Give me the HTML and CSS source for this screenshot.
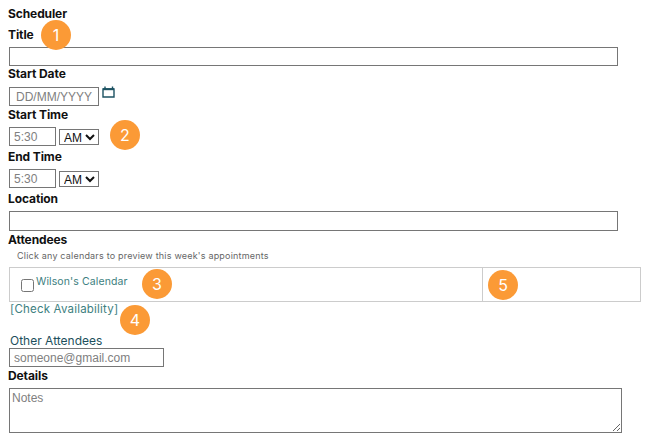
FILE: index.html
```html
<!DOCTYPE html>
<html lang="en">
<head>
<meta charset="utf-8">
<title>Scheduler</title>
<link rel="stylesheet" href="styles.css">
</head>
<body>
<form class="form">
  <div class="label label-first">Scheduler</div>
  <div class="label label-title">Title</div>
  <input class="field field-wide" type="text">
  <div class="label label-date">Start Date</div>
  <div class="row row-date">
    <input class="field field-date" type="text" placeholder="DD/MM/YYYY">
    <svg class="cal" viewBox="0 0 13 12" width="13" height="12" aria-hidden="true">
      <path d="M1 3h11v8H1z" fill="none" stroke="#1d5363" stroke-width="1.4"/>
      <path d="M1 3.2h11" stroke="#1d5363" stroke-width="2"/>
      <path d="M3 .5v2.5M10.5 .5v2.5" stroke="#1d5363" stroke-width="1.4"/>
    </svg>
  </div>
  <div class="label label-start">Start Time</div>
  <div class="row">
    <input class="field field-time" type="text" placeholder="5:30">
    <select class="ampm"><option>AM</option><option>PM</option></select>
  </div>
  <div class="label label-loose">End Time</div>
  <div class="row">
    <input class="field field-time" type="text" placeholder="5:30">
    <select class="ampm"><option>AM</option><option>PM</option></select>
  </div>
  <div class="label label-loose">Location</div>
  <input class="field field-wide field-loc" type="text">
  <div class="label label-start">Attendees</div>
  <div class="hint">Click any calendars to preview this week's appointments</div>
  <div class="cals">
    <div class="cal-cell cal-main">
      <input class="check" type="checkbox" id="wilson">
      <label class="link" for="wilson">Wilson's Calendar</label>
    </div>
    <div class="cal-cell cal-side"></div>
  </div>
  <a class="link check-link" href="#">[Check Availability]</a>
  <div class="other">Other Attendees</div>
  <input class="field field-email" type="text" placeholder="someone@gmail.com">
  <div class="label label-details">Details</div>
  <textarea class="notes" placeholder="Notes"></textarea>
</form>
<span class="badge b1">1</span>
<span class="badge b2">2</span>
<span class="badge b3">3</span>
<span class="badge b4">4</span>
<span class="badge b5">5</span>
</body>
</html>
```
FILE: styles.css
```css
* { box-sizing: border-box; }
html, body { margin: 0; padding: 0; background: #fff; }
body { position: relative; width: 646px; height: 443px; overflow: hidden; font-family: Inter, "Liberation Sans", sans-serif; color: #111; }
.form { display: flex; flex-direction: column; align-items: flex-start; padding: 7px 0 0 8px; }
.label { font-size: 12px; font-weight: 700; line-height: 14px; height: 14px; color: #111; letter-spacing: -.1px; }
.label-first { margin-top: 0; }
.label-title { margin-top: 7px; }
.label-date { margin-top: 1px; }
.label-start { margin-top: 2px; }
.label-loose { margin-top: 4px; }
.field { display: block; margin: 0 0 0 1px; padding: 0 4px; border: 1px solid #767676; border-radius: 0; background: #fff; font-family: "Liberation Sans", sans-serif; font-size: 12px; color: #333; outline: none; }
.field::placeholder { color: #808080; opacity: 1; }
.field-wide { width: 609px; height: 19px; margin-top: 5px; }
.field-loc { height: 20px; margin-top: 5px; }
.row { display: flex; align-items: center; gap: 3px; margin-top: 5px; height: 19px; }
.row-date { align-items: flex-start; gap: 3px; margin-top: 6px; }
.field-date { width: 90px; height: 19px; padding-left: 6px; }
.field-time { width: 47px; height: 19px; }
.cal { margin-top: -1px; }
.ampm { width: 40px; height: 16px; padding: 0; border: 1px solid #767676; border-radius: 0; background: #fff; font-family: "Liberation Sans", sans-serif; font-size: 12px; color: #111; }
.hint { margin: 3px 0 0 9px; font-size: 9px; line-height: 12px; height: 12px; color: #666; letter-spacing: .2px; }
.cals { display: flex; width: 632px; height: 35px; margin: 5px 0 0 1px; border: 1px solid #ccc; }
.cal-cell { height: 100%; }
.cal-main { display: flex; align-items: center; width: 473px; border-right: 1px solid #ccc; padding-left: 11px; gap: 2px; }
.cal-side { flex: 1; }
.check { width: 13px; height: 13px; margin: 1px 0 0 0; }
.link { font-size: 10.5px; line-height: 14px; color: #3d8080; text-decoration: none; letter-spacing: .1px; margin-top: -6px; }
.check-link { margin: 0 0 0 2px; font-size: 11.5px; height: 14px; letter-spacing: .2px; }
.other { margin: 18px 0 0 2px; font-size: 12px; line-height: 14px; height: 14px; color: #1d4f5c; }
.field-email { width: 155px; height: 19px; margin-top: 0; }
.label-details { margin-top: 2px; }
.notes { display: block; width: 613px; height: 45px; margin: 5px 0 0 1px; padding: 2px; border: 1px solid #767676; border-radius: 0; font-family: "Liberation Sans", sans-serif; font-size: 12px; color: #333; outline: none; }
.notes::placeholder { color: #808080; opacity: 1; }
.badge { position: absolute; width: 30px; height: 30px; border-radius: 50%; background: #fb9a36; color: #fff; font-family: Inter, sans-serif; font-size: 16px; line-height: 30px; text-align: center; }
.b1 { left: 41px; top: 20px; }
.b2 { left: 110px; top: 120px; }
.b3 { left: 142px; top: 269px; }
.b4 { left: 120px; top: 305px; }
.b5 { left: 488px; top: 270px; }
```
